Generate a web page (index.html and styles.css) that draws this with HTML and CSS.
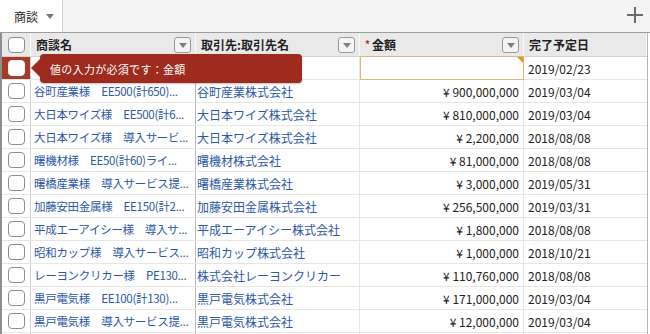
FILE: index.html
```html
<!DOCTYPE html>
<html lang="ja">
<head>
<meta charset="utf-8">
<link rel="stylesheet" href="styles.css">
</head>
<body>
<div class="tabbar">
  <div class="tab"><span class="tab-label">商談</span><span class="tab-caret"></span></div>
  <div class="plus">
    <svg width="20" height="20" viewBox="0 0 20 20"><path d="M10 2v16M2 10h16" stroke="#6b6b6b" stroke-width="2" fill="none"/></svg>
  </div>
</div>
<div class="grid">
  <div class="row head">
    <div class="c chk"><span class="box"></span></div>
    <div class="c name"><span class="htext">商談名</span><span class="dd"></span></div>
    <div class="c acct"><span class="htext">取引先:取引先名</span><span class="dd"></span></div>
    <div class="c amt"><span class="htext"><span class="req">*</span>金額</span><span class="dd"></span></div>
    <div class="c date"><span class="htext">完了予定日</span></div>
  </div>
  <div class="row">
    <div class="c chk err"><span class="box"></span></div>
    <div class="c name"></div>
    <div class="c acct"></div>
    <div class="c amt edit"><span class="flag"></span></div>
    <div class="c date">2019/02/23</div>
  </div>
  <div class="row"><div class="c chk"><span class="box"></span></div><div class="c name link">谷町産業様　EE500(計650)...</div><div class="c acct link">谷町産業株式会社</div><div class="c amt">¥ 900,000,000</div><div class="c date">2019/03/04</div></div>
  <div class="row"><div class="c chk"><span class="box"></span></div><div class="c name link">大日本ワイズ様　EE500(計6...</div><div class="c acct link">大日本ワイズ株式会社</div><div class="c amt">¥ 810,000,000</div><div class="c date">2019/03/04</div></div>
  <div class="row"><div class="c chk"><span class="box"></span></div><div class="c name link">大日本ワイズ様　導入サービ...</div><div class="c acct link">大日本ワイズ株式会社</div><div class="c amt">¥ 2,200,000</div><div class="c date">2018/08/08</div></div>
  <div class="row"><div class="c chk"><span class="box"></span></div><div class="c name link">曙機材様　EE50(計60)ライ...</div><div class="c acct link">曙機材株式会社</div><div class="c amt">¥ 81,000,000</div><div class="c date">2018/08/08</div></div>
  <div class="row"><div class="c chk"><span class="box"></span></div><div class="c name link">曙橋産業様　導入サービス提...</div><div class="c acct link">曙橋産業株式会社</div><div class="c amt">¥ 3,000,000</div><div class="c date">2019/05/31</div></div>
  <div class="row"><div class="c chk"><span class="box"></span></div><div class="c name link">加藤安田金属様　EE150(計2...</div><div class="c acct link">加藤安田金属株式会社</div><div class="c amt">¥ 256,500,000</div><div class="c date">2019/03/31</div></div>
  <div class="row"><div class="c chk"><span class="box"></span></div><div class="c name link">平成エーアイシー様　導入サ...</div><div class="c acct link">平成エーアイシー株式会社</div><div class="c amt">¥ 1,800,000</div><div class="c date">2018/08/08</div></div>
  <div class="row"><div class="c chk"><span class="box"></span></div><div class="c name link">昭和カップ様　導入サービス...</div><div class="c acct link">昭和カップ株式会社</div><div class="c amt">¥ 1,000,000</div><div class="c date">2018/10/21</div></div>
  <div class="row"><div class="c chk"><span class="box"></span></div><div class="c name link">レーヨンクリカー様　PE130...</div><div class="c acct link">株式会社レーヨンクリカー</div><div class="c amt">¥ 110,760,000</div><div class="c date">2018/08/08</div></div>
  <div class="row"><div class="c chk"><span class="box"></span></div><div class="c name link">黒戸電気様　EE100(計130)...</div><div class="c acct link">黒戸電気株式会社</div><div class="c amt">¥ 171,000,000</div><div class="c date">2019/03/04</div></div>
  <div class="row"><div class="c chk"><span class="box"></span></div><div class="c name link">黒戸電気様　導入サービス提...</div><div class="c acct link">黒戸電気株式会社</div><div class="c amt">¥ 12,000,000</div><div class="c date">2019/03/04</div></div>
  <div class="row"><div class="c chk"><span class="box"></span></div><div class="c name link"></div><div class="c acct link"></div><div class="c amt"></div><div class="c date"></div></div>
</div>
<div class="tooltip">値の入力が必須です：金額</div>
</body>
</html>
```
FILE: styles.css
```css
* { box-sizing: border-box; }
html, body { margin: 0; padding: 0; }
body {
  width: 650px;
  height: 334px;
  overflow: hidden;
  background: #ffffff;
  font-family: "Noto Sans CJK JP", "Noto Sans", sans-serif;
  font-size: 12px;
  color: #222;
  position: relative;
}
.tabbar {
  height: 33px;
  background: #f3f3f3;
  border-bottom: 1px solid #9d9d9d;
  display: flex;
  justify-content: space-between;
  align-items: stretch;
}
.tab {
  width: 63px;
  background: #ffffff;
  border-right: 1px solid #cfcfcf;
  display: flex;
  align-items: center;
  padding-left: 14px;
  gap: 8px;
}
.tab-label { font-size: 12px; color: #222; }
.tab-caret {
  width: 0; height: 0;
  border-left: 4px solid transparent;
  border-right: 4px solid transparent;
  border-top: 5px solid #777;
}
.plus {
  display: flex;
  align-items: center;
  padding-right: 5px;
  padding-bottom: 2px;
}
.grid {
  width: 648px;
  border-left: 2px solid #8e8e8e;
  border-right: 1px solid #b5b5b5;
}
.row {
  display: flex;
  height: 23px;
  border-bottom: 1px solid #e6e6e6;
}
.row.head {
  height: 24px;
  background: #e9e9e9;
  border-bottom: 1px solid #d2d2d2;
  font-weight: bold;
}
.c {
  border-right: 1px solid #e6e6e6;
  display: flex;
  align-items: center;
  white-space: nowrap;
  overflow: hidden;
  padding: 0 3px;
  flex: none;
}
.head .c { border-right: 1px solid #fafafa; justify-content: space-between; padding: 0 4px 0 5px; }
.chk { width: 29px; justify-content: center; padding: 0; border-right-color: #d0d0d0; }
.head .chk { justify-content: center; padding: 0; border-right-color: #fafafa; }
.name { width: 165px; border-right: 1px solid #b9b9b9; }
.name.link { font-size: 11.5px; letter-spacing: -0.3px; }
.acct { width: 164px; padding-left: 1px; }
.amt { width: 164px; justify-content: flex-end; padding-right: 4px; color: #222; }
.date { flex: 1; border-right: none; padding-left: 4px; color: #222; }
.link { color: #2d58a6; }
.box {
  width: 17px; height: 16px;
  border: 1px solid #8d8d8d;
  border-radius: 4px;
  background: #ffffff;
  margin-left: 1px;
}
.err { background: #a63a2b; }
.err .box { border-color: #f3f3f3; }
.edit {
  position: relative;
  border: 1px solid #e0b674;
  margin-top: -1px;
  height: 24px;
}
.flag {
  position: absolute;
  top: 0; right: 0;
  width: 0; height: 0;
  border-top: 6px solid #e8932a;
  border-left: 6px solid transparent;
}
.htext { color: #1f1f1f; font-size: 12px; }
.req { color: #c0281f; margin-right: 2px; font-size: 10px; vertical-align: 2px; }
.dd {
  width: 17px; height: 16px;
  border: 1px solid #9a9a9a;
  border-radius: 3px;
  background: #f4f4f4;
  display: flex;
  align-items: center;
  justify-content: center;
  margin-top: 1px;
}
.dd::after {
  content: "";
  width: 0; height: 0;
  border-left: 4px solid transparent;
  border-right: 4px solid transparent;
  border-top: 5px solid #808080;
  margin-top: 1px;
}
.tooltip {
  position: absolute;
  left: 40px;
  top: 54px;
  width: 262px;
  height: 29px;
  background: #9e2b1d;
  border-radius: 4px;
  color: #ffffff;
  font-size: 11px;
  letter-spacing: 0.3px;
  display: flex;
  align-items: center;
  padding-left: 10px;
  box-shadow: 0 1px 2px rgba(0,0,0,0.25);
}
.tooltip::before {
  content: "";
  position: absolute;
  left: -9px;
  top: 5px;
  width: 0; height: 0;
  border-top: 9px solid transparent;
  border-bottom: 9px solid transparent;
  border-right: 9px solid #9e2b1d;
}
```
